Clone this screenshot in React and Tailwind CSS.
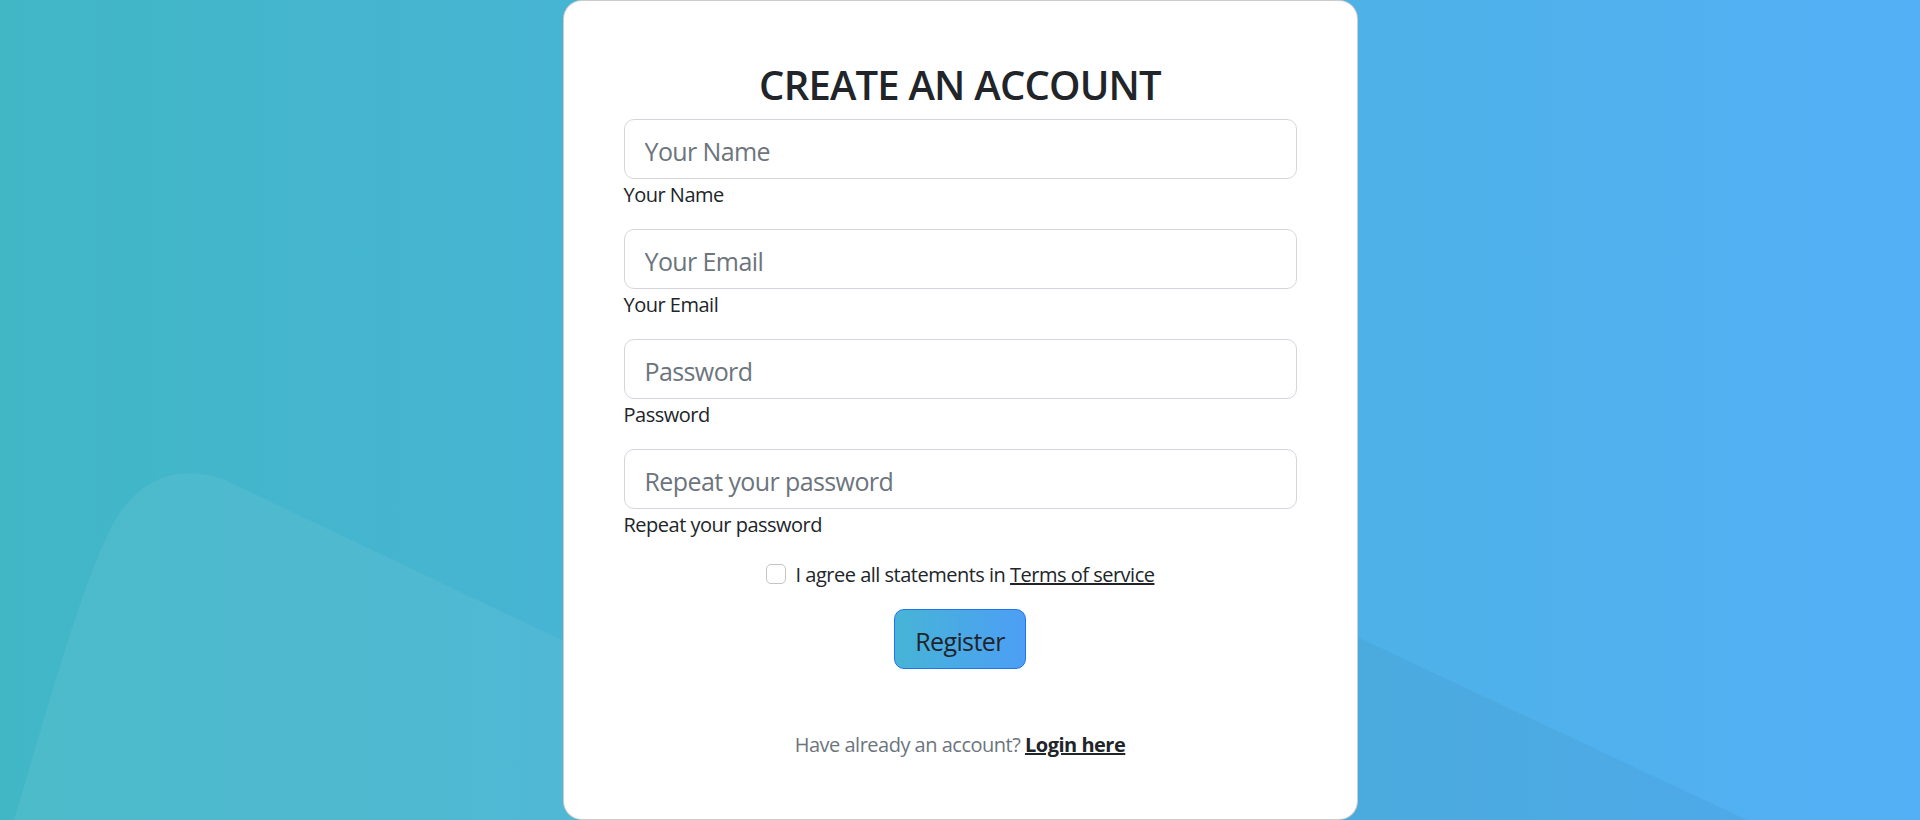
import { useState } from 'react'

const fields = [
  { id: 'name', type: 'text', label: 'Your Name' },
  { id: 'email', type: 'email', label: 'Your Email' },
  { id: 'password', type: 'password', label: 'Password' },
  { id: 'repeat', type: 'password', label: 'Repeat your password' },
]

function Backdrop() {
  return (
    <svg
      className="absolute inset-0 h-full w-full"
      viewBox="0 0 1920 820"
      preserveAspectRatio="none"
      aria-hidden="true"
    >
      <path
        d="M 14 820 C 50 700, 80 590, 110 530 C 135 480, 175 462, 225 480 L 940 820 Z"
        fill="#ffffff"
        fillOpacity="0.06"
      />
      <path d="M 1100 515 L 1349 633 L 1747 820 L 1100 820 Z" fill="#000000" fillOpacity="0.035" />
    </svg>
  )
}

export default function App() {
  const [agree, setAgree] = useState(false)

  return (
    <div
      className="relative flex h-[820px] w-full justify-center overflow-hidden bg-gradient-to-r from-[#41b7c6] via-[#4ab2dc] to-[#53b0f6]"
      style={{ fontFamily: '"Open Sans", "Noto Sans", sans-serif' }}
    >
      <Backdrop />
      <div className="relative h-[820px] w-[795px] rounded-[19px] border border-black/20 bg-white px-[60px] pt-[60px]">
        <h2 className="mb-[10px] text-center text-[40px] font-semibold uppercase leading-[48px] tracking-[-0.8px] text-[#212529]">
          Create an account
        </h2>
        <form onSubmit={(e) => e.preventDefault()}>
          {fields.map((f) => (
            <div key={f.id} className="mb-5">
              <input
                id={f.id}
                type={f.type}
                placeholder={f.label}
                className="block h-[60px] w-full rounded-[10px] border border-[#d3d7dc] bg-white px-5 pt-[4px] text-[25px] tracking-[-0.6px] text-[#212529] outline-none placeholder:text-[#6c757d]"
              />
              <label htmlFor={f.id} className="block pt-[2px] text-[20px] leading-[28px] tracking-[-0.5px] text-[#212529]">
                {f.label}
              </label>
            </div>
          ))}

          <div className="mb-5 flex items-center justify-center">
            <input
              id="agree"
              type="checkbox"
              checked={agree}
              onChange={(e) => setAgree(e.target.checked)}
              className="mr-[10px] h-5 w-5 appearance-none rounded-[5px] border border-[#c4c4c4] bg-white"
            />
            <label htmlFor="agree" className="pt-[2px] text-[20px] leading-[28px] tracking-[-0.5px] text-[#212529]">
              I agree all statements in <a href="#!" className="text-[#212529] underline">Terms of service</a>
            </label>
          </div>

          <div className="flex justify-center">
            <button
              type="button"
              className="h-[60px] rounded-[10px] border border-[#1f74f0] bg-gradient-to-r from-[#47b4d6] to-[#4d9ef5] px-5 pt-[4px] text-[25px] leading-[34px] tracking-[-0.6px] text-[#212529]"
            >
              Register
            </button>
          </div>

          <p className="mt-[60px] pt-[2px] text-center text-[20px] leading-[28px] tracking-[-0.5px] text-[#6c757d]">
            Have already an account?{' '}
            <a href="#!" className="font-bold text-[#212529] underline">
              Login here
            </a>
          </p>
        </form>
      </div>
    </div>
  )
}
